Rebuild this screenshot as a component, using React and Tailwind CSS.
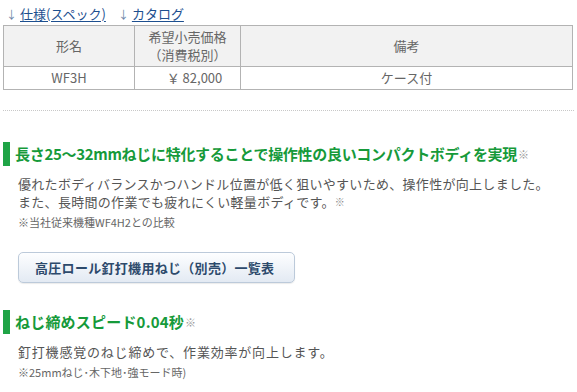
import React from 'react';

const font = { fontFamily: '"Noto Sans CJK JP", "Noto Sans", sans-serif' };

const Heading = ({ children, tight }) => (
  <div className="flex items-center pl-[3px]">
    <div className="w-[7px] h-[24px] bg-[#1fa446] shrink-0"></div>
    <h3 className={`ml-[5px] text-[15px] leading-[24px] font-bold text-[#169a3a] ${tight ? 'tracking-[-0.3px]' : 'tracking-[0.2px]'}`}>
      {children}
      <span className="text-[11px] font-normal text-[#999] align-top ml-[1px]">※</span>
    </h3>
  </div>
);

export default function App() {
  return (
    <div className="w-[577px] h-[392px] overflow-hidden bg-white" style={font}>
      {/* Links */}
      <div className="flex gap-[12px] pl-[6px] pt-[5px] text-[13px] leading-[18px]">
        <a href="#spec" className="text-[#1d4f8f] flex items-center">
          <span className="text-[#6b86a8] text-[11px] mr-[3px]">↓</span>
          <span className="underline underline-offset-2">仕様(スペック)</span>
        </a>
        <a href="#catalog" className="text-[#1d4f8f] flex items-center">
          <span className="text-[#6b86a8] text-[11px] mr-[3px]">↓</span>
          <span className="underline underline-offset-2">カタログ</span>
        </a>
      </div>

      {/* Spec table */}
      <table className="mt-[2px] ml-[3px] w-[570px] border-collapse text-[13px] text-[#666] table-fixed">
        <colgroup>
          <col className="w-[131px]" />
          <col className="w-[106px]" />
          <col />
        </colgroup>
        <thead>
          <tr className="bg-[#f2f2f2]">
            <th className="h-[41px] border border-[#b3b3b3] font-normal">形名</th>
            <th className="h-[41px] border border-[#b3b3b3] font-normal leading-[18px]">
              希望小売価格<br />（消費税別）
            </th>
            <th className="h-[41px] border border-[#b3b3b3] font-normal">備考</th>
          </tr>
        </thead>
        <tbody>
          <tr>
            <td className="h-[23px] border border-[#b3b3b3] text-center">WF3H</td>
            <td className="h-[23px] border border-[#b3b3b3] text-center pl-[14px]">￥ 82,000</td>
            <td className="h-[23px] border border-[#b3b3b3] text-center">ケース付</td>
          </tr>
        </tbody>
      </table>

      <div className="mt-[20px] mx-[3px] border-t border-dotted border-[#c8c8c8]"></div>

      {/* Feature 1 */}
      <div className="mt-[31px]">
        <Heading tight>長さ25～32mmねじに特化することで操作性の良いコンパクトボディを実現</Heading>
        <div className="pl-[18px] mt-[9px] text-[13px] leading-[18px] text-[#555]">
          <p className="tracking-[0.3px]">優れたボディバランスかつハンドル位置が低く狙いやすいため、操作性が向上しました。</p>
          <p className="tracking-[0.3px]">また、長時間の作業でも疲れにくい軽量ボディです。<span className="text-[10px] text-[#888] align-top">※</span></p>
          <p className="mt-[3px] text-[11px] leading-[16px] text-[#666]">※当社従来機種WF4H2との比較</p>
          <button className="mt-[22px] w-[277px] h-[31px] rounded-[5px] border border-[#bccada] bg-gradient-to-b from-[#fdfeff] to-[#e3eaf3] shadow-[0_1px_1px_rgba(0,0,0,0.08)] text-left pl-[16px] text-[13px] font-bold text-[#2d4a6c] tracking-[0.3px]">
            高圧ロール釘打機用ねじ（別売）一覧表
          </button>
        </div>
      </div>

      {/* Feature 2 */}
      <div className="mt-[27px]">
        <Heading>ねじ締めスピード0.04秒</Heading>
        <div className="pl-[18px] mt-[9px] text-[13px] leading-[18px] text-[#555]">
          <p className="tracking-[0.8px]">釘打機感覚のねじ締めで、作業効率が向上します。</p>
          <p className="mt-[3px] text-[11px] leading-[16px] text-[#666]">※25mmねじ･木下地･強モード時)</p>
        </div>
      </div>
    </div>
  );
}
